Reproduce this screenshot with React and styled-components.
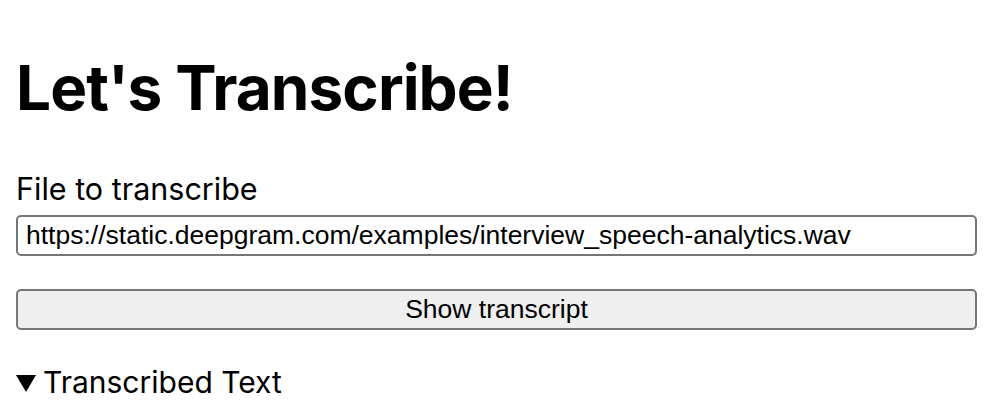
import React from "react";
import styled, { createGlobalStyle } from "styled-components";

const Global = createGlobalStyle`
  html, body { margin: 0; padding: 0; background: #fff; }
  body { font-family: Inter, "Noto Sans", sans-serif; color: #000; }
`;

const Page = styled.main`
  width: 961px;
  padding: 0 0 0 16px;
  display: flex;
  flex-direction: column;
`;

const Title = styled.h1`
  margin: 50px 0 0;
  font-size: 62px;
  font-weight: 700;
  line-height: 75px;
  letter-spacing: -0.9px;
`;

const Label = styled.label`
  margin-top: 46px;
  font-size: 30.5px;
  line-height: 35px;
  display: block;
`;

const UrlInput = styled.input`
  box-sizing: border-box;
  margin-top: 9px;
  width: 100%;
  height: 41px;
  border: 2px solid #767676;
  border-radius: 5px;
  padding: 0 8px;
  font-family: "Liberation Sans", Arial, sans-serif;
  font-size: 26.5px;
  color: #000;
  background: #fff;
  outline: none;
`;

const Button = styled.button`
  box-sizing: border-box;
  margin-top: 33px;
  width: 100%;
  height: 41px;
  border: 2px solid #767676;
  border-radius: 5px;
  background: #efefef;
  font-family: "Liberation Sans", Arial, sans-serif;
  font-size: 26.5px;
  color: #000;
  padding: 0;
`;

const Details = styled.details`
  margin-top: 35px;
  font-size: 30px;
  line-height: 35px;
`;

const Summary = styled.summary`
  list-style: none;
  display: flex;
  align-items: center;
  gap: 7px;
  &::-webkit-details-marker { display: none; }
`;

const Triangle = styled.span`
  display: inline-block;
  width: 0;
  height: 0;
  border-left: 10px solid transparent;
  border-right: 10px solid transparent;
  border-top: 17px solid #000;
  margin-top: 2px;
`;

export default function App() {
  return (
    <>
      <Global />
      <Page>
        <Title>Let's Transcribe!</Title>
        <Label htmlFor="url">File to transcribe</Label>
        <UrlInput
          id="url"
          defaultValue="https://static.deepgram.com/examples/interview_speech-analytics.wav"
        />
        <Button>Show transcript</Button>
        <Details open>
          <Summary>
            <Triangle />
            Transcribed Text
          </Summary>
        </Details>
      </Page>
    </>
  );
}
